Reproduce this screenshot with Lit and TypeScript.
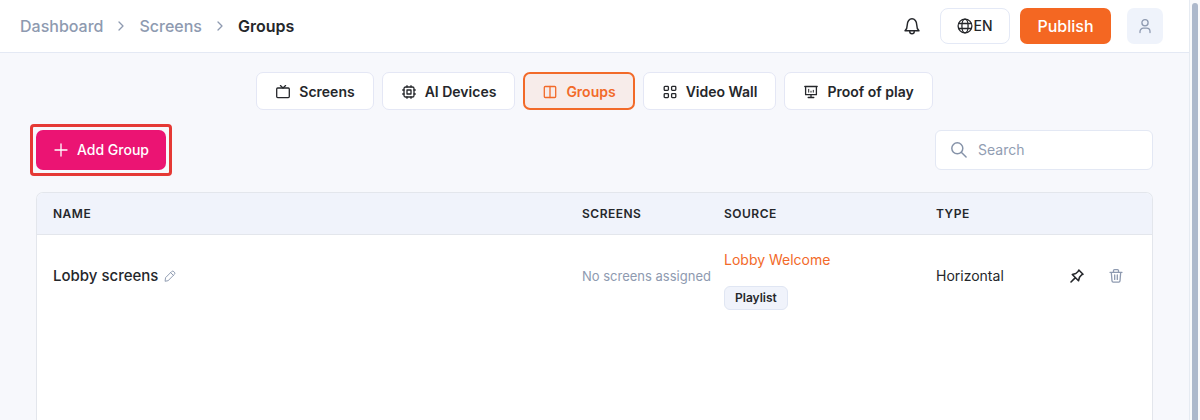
import { LitElement, html, css, svg } from "lit";
import { customElement, state } from "lit/decorators.js";
import { classMap } from "lit/directives/class-map.js";

const shapes: Record<string, unknown> = {
  chevron: svg`<path d="M6 4 10 8 6 12" />`,
  bell: svg`<path d="M1.800 12.200c1.500-1.400 2-2.700 2-5.400a4.200 5.300 0 0 1 8.400 0c0 2.700.5 4 2 5.400Z" /><path d="M6 12.800a2 2 0 0 0 4 0" />`,
  globe: svg`<circle cx="8" cy="8" r="6.900" /><ellipse cx="8" cy="8" rx="3.100" ry="6.900" /><path d="M1.800 5.500h12.400M1.800 10.500h12.400" />`,
  user: svg`<circle cx="8" cy="4.700" r="3.100" /><path d="M3 14.600v-1.100a3.300 3.300 0 0 1 3.300-3.300h3.400a3.300 3.300 0 0 1 3.300 3.300v1.100" />`,
  tv: svg`<rect x="1.700" y="4" width="12.600" height="9.600" rx="1" /><path d="m5.400 1.600 2.600 2.400 2.600-2.400" />`,
  chip: svg`<rect x="3" y="3" width="10" height="10" rx="1.600" /><rect x="6" y="6" width="4" height="4" /><path d="M6 1.700V3M10 1.700V3M6 13v1.300M10 13v1.300M1.700 6H3M1.700 10H3M13 6h1.300M13 10h1.300" />`,
  columns: svg`<rect x="2.300" y="2.500" width="11.400" height="11" rx="1" /><path d="M8 2.500v11" />`,
  grid: svg`<rect x="2.200" y="2.400" width="4.200" height="4" rx=".8" /><rect x="9.600" y="2.400" width="4.200" height="4" rx=".8" /><rect x="2.200" y="9.600" width="4.200" height="4" rx=".8" /><rect x="9.600" y="9.600" width="4.200" height="4" rx=".8" />`,
  board: svg`<path d="M1.800 2.500h12.400M2.600 2.500v8.200h10.800V2.500M8 10.700v2.800M5.200 13.500h5.600" /><path stroke-width="1" d="M5.700 5.300v2.900M8 7.200v1M10.300 6.300v1.900" />`,
  plus: svg`<path d="M8 2v12M2 8h12" />`,
  search: svg`<circle cx="6.500" cy="6.500" r="4.900" /><path d="m10 10 4.300 4.300" />`,
  pencil: svg`<path d="m1.500 14.500.6-4.300 8-8a2.200 2.200 0 0 1 3.100 0l.6.600a2.200 2.200 0 0 1 0 3.100l-8 8Z M8.800 3.500l3.700 3.700" />`,
  pin: svg`<path stroke-width="1.600" d="M9.800 2 14 6.200 12.500 6.900 10.500 9.200 9.500 12.700 3.300 6.500 6.800 5.500 9.100 3.500Z M6.400 9.600 2 14" />`,
  trash: svg`<path d="M2 4.300h12M5.500 4.300V2.600c0-.6.400-1 1-1h3c.6 0 1 .4 1 1v1.700M3.300 4.300l.7 8.600c.1.800.5 1.200 1.200 1.200h5.600c.7 0 1.100-.4 1.200-1.200l.7-8.600M6.700 7v4.400M9.300 7v4.400" />`,
};

const icon = (name: string, size = "m") => html`
  <svg class="icon ${size}" viewBox="0 0 16 16" aria-hidden="true">${shapes[name]}</svg>
`;

const tabs = [
  { label: "Screens", icon: "tv" },
  { label: "AI Devices", icon: "chip" },
  { label: "Groups", icon: "columns" },
  { label: "Video Wall", icon: "grid" },
  { label: "Proof of play", icon: "board" },
];

const groups = [
  {
    name: "Lobby screens",
    screens: "No screens assigned",
    source: "Lobby Welcome",
    kind: "Playlist",
    type: "Horizontal",
  },
];

@customElement("app-root")
export class AppRoot extends LitElement {
  @state() private current = "Groups";

  static styles = css`
    :host {
      display: flex;
      height: 100vh;
      overflow: hidden;
      background: #f7f8fc;
      color: #25272b;
      font: 500 14px/20px Inter, "Noto Sans", sans-serif;
    }
    * { box-sizing: border-box; }
    button, input { font: inherit; color: inherit; margin: 0; }
    button { cursor: pointer; border: 0; padding: 0; background: none; white-space: nowrap; }
    a { color: inherit; text-decoration: none; }
    button, .crumbs { display: flex; align-items: center; }
    .icon { flex: none; fill: none; stroke: currentColor; stroke-width: 1.3; stroke-linejoin: round; stroke-linecap: round; }
    .s { width: 12px; height: 12px; }
    .m { width: 16px; height: 16px; }
    .l { width: 18px; height: 18px; }
    .page { flex: 1; min-width: 0; display: flex; flex-direction: column; }
    .header {
      display: flex; align-items: center; justify-content: space-between;
      height: 53px; padding: 0 26px 0 20px;
      background: #fff; border-bottom: 1px solid #e4e9f4;
    }
    .crumbs { gap: 10px; font-size: 16px; color: #8e9ab0; }
    .here { color: #25272b; font-weight: 600; }
    .tools { display: flex; align-items: center; }
    .bell { padding: 9px; margin-right: 10px; }
    .lang { height: 36px; width: 70px; justify-content: center; border: 1px solid #e4e9f6; border-radius: 8px; background: #fff; margin-right: 10px; }
    .publish { height: 36px; width: 91px; justify-content: center; border-radius: 7px; background: #f46722; color: #fff; font-size: 16px; margin-right: 16px; }
    .account { height: 36px; width: 36px; justify-content: center; border-radius: 7px; background: #eff3fb; color: #8e9ab0; }
    .tabs { display: flex; justify-content: center; gap: 8px; padding: 19px 0 20px; }
    .tab { height: 38px; padding: 1px 18px 0; gap: 8px; border: 1px solid #e4e7f5; border-radius: 7px; background: #fff; font-weight: 600; }
    .tab.on { color: #f26a29; border: 2px solid #f26a29; padding: 1px 17px 0; background: #f7ecea; }
    .body { flex: 1; display: flex; flex-direction: column; padding: 0 36px; gap: 22px; }
    .bar { display: flex; justify-content: space-between; }
    .callout { margin: -6px; padding: 3px; border: 3px solid #e53935; border-radius: 4px; }
    .add { height: 40px; width: 130px; justify-content: center; gap: 8px; border-radius: 7px; background: #eb1473; color: #fff; }
    .search { display: flex; align-items: center; gap: 10px; width: 218px; height: 40px; padding: 0 14px; border: 1px solid #e3e8f4; border-radius: 6px; background: #fff; color: #8592a8; }
    .field { flex: 1; min-width: 0; border: 0; padding: 0; outline: 0; background: none; font-weight: 400; }
    .field::placeholder { color: #919db2; opacity: 1; }
    .card { flex: 1; border: 1px solid #e3e6ec; border-bottom: 0; border-radius: 7px 7px 0 0; background: #fff; overflow: hidden; }
    table { width: 100%; table-layout: fixed; border-collapse: separate; border-spacing: 0; }
    th { height: 42px; padding: 0 0 0 16px; text-align: left; background: #f0f3fb; border-bottom: 1px solid #e3e6ec; font-size: 12px; font-weight: 600; letter-spacing: 0.5px; }
    td { height: 81px; padding: 0 0 0 16px; vertical-align: middle; white-space: nowrap; font-weight: 400; }
    .c-screens { width: 142px; }
    .c-source { width: 212px; }
    .c-type { width: 125px; }
    .c-actions { width: 107px; }
    .name { display: flex; align-items: center; gap: 6px; font-size: 15px; font-weight: 500; }
    .muted { color: #8e9ab0; }
    .none { font-size: 13px; }
    .source { display: flex; flex-direction: column; align-items: flex-start; gap: 16px; padding-top: 8px; }
    .link { color: #f26a29; }
    .badge { height: 24px; padding: 0 10px; border: 1px solid #e0e6f3; border-radius: 6px; background: #f0f3fb; font-size: 12px; line-height: 22px; font-weight: 600; }
    .actions { display: flex; justify-content: flex-end; gap: 7px; padding-right: 20px; }
    .act { padding: 8px; }
    .track { flex: none; width: 11px; padding: 3px 2px 0; background: #f9fafc; border-left: 1px solid #e6ebf2; }
    .thumb { height: 100%; border-radius: 3px 3px 0 0; background: #adb9cc; }
  `;

  render() {
    return html`
      <div class="page">
        <header class="header">
          <nav class="crumbs" aria-label="Breadcrumb">
            <a href="#dashboard">Dashboard</a>${icon("chevron")}
            <a href="#screens">Screens</a>${icon("chevron")}
            <span class="here" aria-current="page">Groups</span>
          </nav>
          <div class="tools">
            <button class="bell" aria-label="Notifications">${icon("bell", "l")}</button>
            <button class="lang">${icon("globe")}EN</button>
            <button class="publish">Publish</button>
            <button class="account" aria-label="Account">${icon("user")}</button>
          </div>
        </header>
        <nav class="tabs" aria-label="Sections">
          ${tabs.map(
            (t) => html`<button
              class=${classMap({ tab: true, on: t.label === this.current })}
              @click=${() => (this.current = t.label)}
            >${icon(t.icon)}${t.label}</button>`
          )}
        </nav>
        <main class="body">
          <div class="bar">
            <div class="callout">
              <button class="add">${icon("plus")}Add Group</button>
            </div>
            <label class="search">
              ${icon("search", "l")}
              <input class="field" type="search" placeholder="Search" aria-label="Search" />
            </label>
          </div>
          <div class="card">
            <table>
              <thead>
                <tr>
                  <th>NAME</th>
                  <th class="c-screens">SCREENS</th>
                  <th class="c-source">SOURCE</th>
                  <th class="c-type">TYPE</th>
                  <th class="c-actions"></th>
                </tr>
              </thead>
              <tbody>
                ${groups.map(
                  (g) => html`<tr>
                    <td>
                      <div class="name">
                        ${g.name}
                        <button class="muted" aria-label="Rename">${icon("pencil", "s")}</button>
                      </div>
                    </td>
                    <td class="muted none">${g.screens}</td>
                    <td>
                      <div class="source">
                        <a class="link" href="#source">${g.source}</a>
                        <span class="badge">${g.kind}</span>
                      </div>
                    </td>
                    <td>${g.type}</td>
                    <td>
                      <div class="actions">
                        <button class="act" aria-label="Pin">${icon("pin")}</button>
                        <button class="act muted" aria-label="Delete">${icon("trash")}</button>
                      </div>
                    </td>
                  </tr>`
                )}
              </tbody>
            </table>
          </div>
        </main>
      </div>
      <div class="track"><div class="thumb"></div></div>
    `;
  }
}
